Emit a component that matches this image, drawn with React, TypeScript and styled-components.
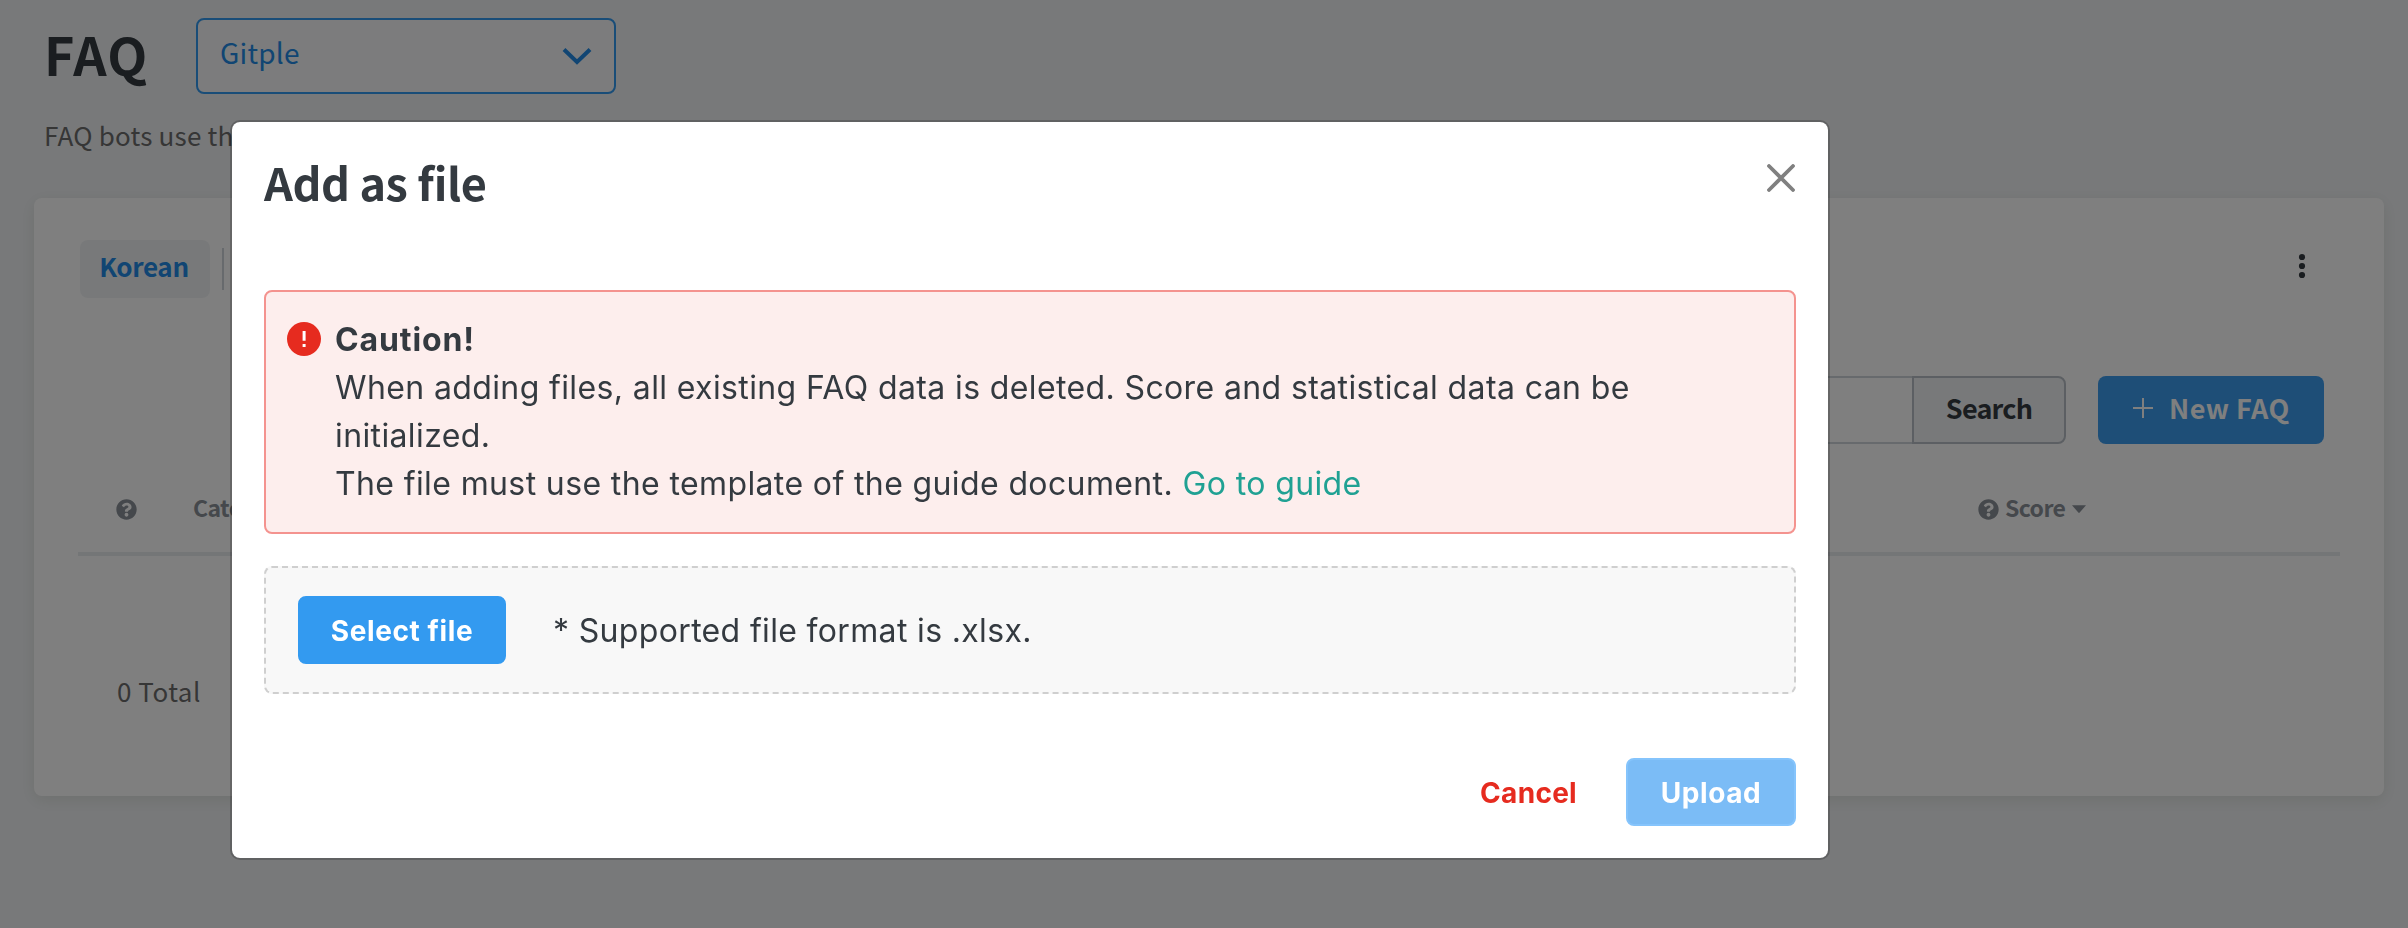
import React from "react";
import styled, { createGlobalStyle } from "styled-components";
import { FaQuestionCircle } from "react-icons/fa";

const pageFont = `"Noto Sans CJK KR", "Noto Sans", sans-serif`;
const dialogFont = `Inter, "Noto Sans CJK KR", sans-serif`;

const GlobalStyle = createGlobalStyle`
  *, *::before, *::after { box-sizing: border-box; }
  html, body { margin: 0; height: 100%; background: #f1f3f5; overflow: hidden; }
  h1, h2, p { margin: 0; }
  button { border: 0; padding: 0; background: none; font: inherit; cursor: pointer; }
  svg { display: block; flex: none; }
`;

const Page = styled.main`
  min-height: 928px;
  padding: 18px 24px 0 34px;
  font-family: ${pageFont};
  color: #343a40;
  white-space: nowrap;
`;

const PageHeader = styled.header`
  display: flex;
  padding-left: 10px;
`;

const PageTitle = styled.h1`
  width: 152px;
  font-size: 52px;
  font-weight: 700;
  line-height: 72px;
  letter-spacing: 1.2px;
`;

const BotSelect = styled.button`
  display: flex;
  align-items: flex-start;
  justify-content: space-between;
  width: 420px;
  height: 76px;
  padding: 0 22px;
  border: 2px solid #339af0;
  border-radius: 8px;
  background: #f8f9fa;
  color: #228be6;
  font-size: 28px;
  line-height: 65px;
  letter-spacing: 0.23px;

  svg { margin-top: 27px; }
`;

const Description = styled.p`
  margin-top: 21px;
  padding-left: 10px;
  font-size: 26px;
  line-height: 40px;
  letter-spacing: 0.2px;
  color: #6c6c6c;
`;

const Card = styled.section`
  height: 598px;
  margin-top: 43px;
  padding: 42px 44px 0;
  border-radius: 8px;
  background: #fff;
  box-shadow: 0 4px 16px rgba(50, 70, 20, 0.1);
`;

const CardTop = styled.div`
  display: flex;
  align-items: center;
  height: 58px;
  padding: 0 26px 0 2px;
`;

const LanguageTab = styled.button`
  width: 130px;
  height: 58px;
  padding: 0 2px 8px 0;
  border-radius: 8px;
  background: #f1f3f5;
  color: #228be6;
  font-size: 26px;
  font-weight: 700;
  letter-spacing: -0.35px;
`;

const TabDivider = styled.span`
  width: 2px;
  height: 42px;
  margin-left: 12px;
  background: #ced4da;
`;

const MoreButton = styled.button`
  margin: 0 0 6px auto;
`;

const Toolbar = styled.div`
  display: flex;
  justify-content: flex-end;
  height: 68px;
  margin-top: 78px;
  padding-right: 16px;
`;

const SearchInput = styled.input`
  width: 420px;
  border: 2px solid #ced4da;
  border-right: 0;
  border-radius: 8px 0 0 8px;
  background: #fff;
`;

const SearchButton = styled.button`
  width: 154px;
  padding: 0 0 6px;
  border: 2px solid #b8bfc6;
  border-radius: 0 8px 8px 0;
  background: #f1f3f5;
  color: #343a40;
  font-size: 27px;
  font-weight: 700;
  letter-spacing: -0.8px;
`;

const NewFaqButton = styled.button`
  display: flex;
  align-items: center;
  gap: 16px;
  width: 226px;
  margin-left: 32px;
  padding: 0 0 5px 35px;
  border-radius: 8px;
  background: #3c9cee;
  color: #fff;
  font-size: 27px;
  font-weight: 700;
  letter-spacing: 0.45px;
`;

const TableHead = styled.div`
  display: grid;
  grid-template-columns: 115px 1fr 362px;
  height: 62px;
  margin-top: 50px;
  border-bottom: 4px solid #e9ecef;
  color: #8a9198;
  font-size: 23px;
  font-weight: 700;
  line-height: 26px;
`;

const HeadCell = styled.div<{ $indent?: number }>`
  display: flex;
  align-items: flex-start;
  padding-left: ${({ $indent = 0 }) => $indent}px;
  letter-spacing: -0.6px;

  svg { margin-top: 5px; }
`;

const HeadLabel = styled.span`
  margin: 0 7px 0 6px;
`;

const Total = styled.p`
  margin: 115px 0 0 39px;
  font-size: 26px;
  line-height: 40px;
  letter-spacing: 0.5px;
  color: #6c6c6c;
`;

const Overlay = styled.div`
  position: fixed;
  inset: 0;
  padding: 120px 0 0 230px;
  background: rgba(0, 0, 0, 0.5);
`;

const Dialog = styled.div`
  width: 1600px;
  height: 740px;
  padding: 30px 32px 0;
  border: 2px solid rgba(0, 0, 0, 0.2);
  border-radius: 10px;
  background: #fff;
  background-clip: padding-box;
  color: #343a40;
  font-family: ${dialogFont};
`;

const DialogHeader = styled.header`
  display: flex;
  align-items: flex-start;
  justify-content: space-between;
  height: 138px;
`;

const DialogTitle = styled.h2`
  font: 700 45px/60px ${pageFont};
  letter-spacing: -0.4px;
`;

const CloseButton = styled.button`
  margin: 12px 1px 0 0;
`;

const Caution = styled.div`
  display: flex;
  gap: 14px;
  height: 244px;
  padding: 24px 21px;
  border: 2px solid #f4938f;
  border-radius: 8px;
  background: #fdeeed;

  svg { margin-top: 6px; }
`;

const CautionText = styled.p`
  font-size: 32px;
  line-height: 48px;
  letter-spacing: 0.38px;

  strong { letter-spacing: 0.88px; }
`;

const GuideLink = styled.a`
  color: #20a193;
  text-decoration: none;
`;

const FileDrop = styled.div`
  display: flex;
  align-items: center;
  gap: 47px;
  height: 128px;
  margin-top: 32px;
  padding-left: 32px;
  border: 2px dashed #cfcfcf;
  border-radius: 8px;
  background: #f8f8f8;
  font-size: 32px;
  letter-spacing: 0.34px;
`;

const DialogButton = styled.button<{ $width: number; $disabled?: boolean }>`
  width: ${({ $width }) => $width}px;
  height: 68px;
  padding-top: 2px;
  border: 2px solid ${({ $disabled }) => ($disabled ? "#85c4fc" : "#339af0")};
  border-radius: 8px;
  background: ${({ $disabled }) => ($disabled ? "#7bbcf6" : "#339af0")};
  color: #fff;
  font-size: 28px;
  font-weight: 700;
  letter-spacing: 0.6px;
`;

const DialogFooter = styled.footer`
  display: flex;
  align-items: center;
  justify-content: flex-end;
  gap: 49px;
  margin-top: 64px;
`;

const CancelButton = styled.button`
  padding-top: 2px;
  color: #e62b1f;
  font-size: 28px;
  font-weight: 700;
  letter-spacing: 0.29px;
`;

export default function App() {
  return (
    <>
      <GlobalStyle />
      <Page>
        <PageHeader>
          <PageTitle>FAQ</PageTitle>
          <BotSelect>
            Gitple
            <svg width="30" height="18" viewBox="0 0 30 18" fill="none" stroke="#228be6" strokeWidth="4">
              <path d="M2 2.5 L15 15 L28 2.5" />
            </svg>
          </BotSelect>
        </PageHeader>
        <Description>FAQ bots use the</Description>

        <Card>
          <CardTop>
            <LanguageTab>Korean</LanguageTab>
            <TabDivider />
            <MoreButton aria-label="More">
              <svg width="24" height="26" viewBox="0 0 24 26" fill="#343a40">
                <circle cx="12" cy="4" r="3.1" />
                <circle cx="12" cy="13" r="3.1" />
                <circle cx="12" cy="22" r="3.1" />
              </svg>
            </MoreButton>
          </CardTop>

          <Toolbar>
            <SearchInput />
            <SearchButton>Search</SearchButton>
            <NewFaqButton>
              <svg width="20" height="20" viewBox="0 0 20 20" stroke="#fff" strokeWidth="2">
                <path d="M10 0V20M0 10H20" />
              </svg>
              New FAQ
            </NewFaqButton>
          </Toolbar>

          <TableHead>
            <HeadCell $indent={38}>
              <FaQuestionCircle size={21} />
            </HeadCell>
            <HeadCell>Category</HeadCell>
            <HeadCell>
              <FaQuestionCircle size={21} />
              <HeadLabel>Score</HeadLabel>
              <svg width="14" height="19" viewBox="0 0 14 19" fill="currentColor">
                <path d="M0 6.2H14L7.7 13.6Q7 14.2 6.3 13.6Z" />
              </svg>
            </HeadCell>
          </TableHead>
          <Total>0 Total</Total>
        </Card>
      </Page>

      <Overlay>
        <Dialog role="dialog">
          <DialogHeader>
            <DialogTitle>Add as file</DialogTitle>
            <CloseButton aria-label="Close">
              <svg width="28" height="28" viewBox="0 0 28 28" stroke="#808080" strokeWidth="3.8" strokeLinecap="round">
                <path d="M2 2L26 26M26 2L2 26" />
              </svg>
            </CloseButton>
          </DialogHeader>

          <Caution>
            <svg width="34" height="34" viewBox="0 0 34 34">
              <circle cx="17" cy="17" r="17" fill="#e62b1f" />
              <path d="M15.6 9H18.6V18.7H15.6ZM15.6 22H18.6V25H15.6Z" fill="#fff" />
            </svg>
            <CautionText>
              <strong>Caution!</strong>
              <br />
              When adding files, all existing FAQ data is deleted. Score and statistical data can be
              <br />
              initialized.
              <br />
              The file must use the template of the guide document. <GuideLink>Go to guide</GuideLink>
            </CautionText>
          </Caution>

          <FileDrop>
            <DialogButton $width={208}>Select file</DialogButton>
            <span>* Supported file format is .xlsx.</span>
          </FileDrop>

          <DialogFooter>
            <CancelButton>Cancel</CancelButton>
            <DialogButton $width={170} $disabled>Upload</DialogButton>
          </DialogFooter>
        </Dialog>
      </Overlay>
    </>
  );
}
